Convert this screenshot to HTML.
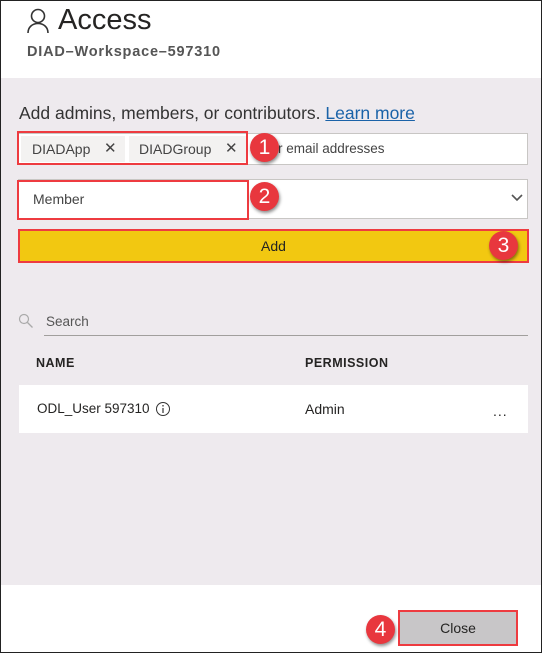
<!DOCTYPE html><html><head><style>
*{margin:0;padding:0;box-sizing:border-box}
body{width:542px;height:653px;position:relative;background:#fff;font-family:"Liberation Sans",sans-serif;color:#252423;overflow:hidden}
.frame{position:absolute;left:0;top:0;width:542px;height:653px;border:1px solid #222}
.a{position:absolute;white-space:nowrap}
.badge{position:absolute;width:29px;height:29px;border-radius:50%;background:#e8373e;color:#fff;font-size:21px;text-align:center;line-height:29px;box-shadow:1px 2px 3px rgba(0,0,0,.45)}
.red{position:absolute;border:2px solid #ee3b40}
</style></head><body>
<div class="a" style="left:1px;top:78px;width:540px;height:507px;background:#eeeaee"></div>
<svg class="a" style="left:26px;top:8px" width="24" height="26" viewBox="0 0 24 26"><circle cx="12" cy="8" r="6.5" fill="none" stroke="#333" stroke-width="1.6"/><path d="M2 25c0-6 4.5-9.5 10-9.5s10 3.5 10 9.5" fill="none" stroke="#333" stroke-width="1.6"/></svg>
<div class="a" style="left:58px;top:4px;font-size:29px;color:#252423">Access</div>
<div class="a" style="left:27px;top:44px;font-size:14.5px;font-weight:bold;color:#555;letter-spacing:.8px">DIAD–Workspace–597310</div>
<div class="a" style="left:19px;top:103px;font-size:17.5px;color:#333">Add admins, members, or contributors. <span style="color:#1a62a8;text-decoration:underline">Learn more</span></div>
<div class="a" style="left:18px;top:133px;width:510px;height:32px;background:#fff;border:1px solid #c8c6c4"></div>
<div class="a" style="left:21px;top:136px;width:104px;height:26px;background:#f3f2f1;font-size:14px;color:#444;line-height:26px;padding-left:11px">DIADApp<span style="position:absolute;left:83px;font-size:15px">✕</span></div>
<div class="a" style="left:129px;top:136px;width:117px;height:26px;background:#f3f2f1;font-size:14px;color:#444;line-height:26px;padding-left:10px">DIADGroup<span style="position:absolute;left:96px;font-size:15px">✕</span></div>
<div class="a" style="left:278px;top:141px;font-size:13.5px;color:#444">r email addresses</div>
<div class="red" style="left:17px;top:131px;width:231px;height:34px"></div>
<div class="a" style="left:18px;top:179px;width:510px;height:40px;background:#fff;border:1px solid #c8c6c4"></div>
<div class="a" style="left:33px;top:191px;font-size:14px;color:#444">Member</div>
<svg class="a" style="left:511px;top:194px" width="12" height="8"><path d="M1 1l5 5 5-5" fill="none" stroke="#555" stroke-width="1.6"/></svg>
<div class="red" style="left:17px;top:180px;width:232px;height:40px"></div>
<div class="a" style="left:18px;top:229px;width:511px;height:34px;background:#f2c811;border:2px solid #ee3b40;text-align:center;line-height:30px;font-size:14px;color:#252423">Add</div>
<div class="badge" style="left:250px;top:133px">1</div>
<div class="badge" style="left:250px;top:182px">2</div>
<div class="badge" style="left:489px;top:231px">3</div>
<svg class="a" style="left:18px;top:313px" width="16" height="16"><circle cx="6" cy="6" r="4.5" fill="none" stroke="#aaa" stroke-width="1.2"/><path d="M9.5 9.5l5 5" stroke="#aaa" stroke-width="1.3"/></svg>
<div class="a" style="left:46px;top:314px;font-size:13.5px;color:#555">Search</div>
<div class="a" style="left:44px;top:335px;width:484px;height:1px;background:#a19f9d"></div>
<div class="a" style="left:36px;top:356px;font-size:12.5px;font-weight:bold;color:#252423;letter-spacing:.5px">NAME</div>
<div class="a" style="left:305px;top:356px;font-size:12.5px;font-weight:bold;color:#252423;letter-spacing:.5px">PERMISSION</div>
<div class="a" style="left:19px;top:385px;width:509px;height:48px;background:#fff"></div>
<div class="a" style="left:37px;top:401px;font-size:13.5px;color:#252423">ODL_User 597310</div>
<svg class="a" style="left:155px;top:401px" width="16" height="16"><circle cx="8" cy="8" r="6.5" fill="none" stroke="#333" stroke-width="1"/><path d="M8 7v5" stroke="#333" stroke-width="1.2"/><circle cx="8" cy="4.8" r=".8" fill="#333"/></svg>
<div class="a" style="left:305px;top:401px;font-size:14px;color:#252423">Admin</div>
<div class="a" style="left:493px;top:403px;font-size:14px;color:#252423;letter-spacing:1px">...</div>
<div class="a" style="left:398px;top:610px;width:120px;height:36px;background:#c8c6c8;border:2px solid #ee3b40;text-align:center;line-height:32px;font-size:14px;color:#252423">Close</div>
<div class="badge" style="left:366px;top:615px">4</div>
<div class="frame"></div>
</body></html>
